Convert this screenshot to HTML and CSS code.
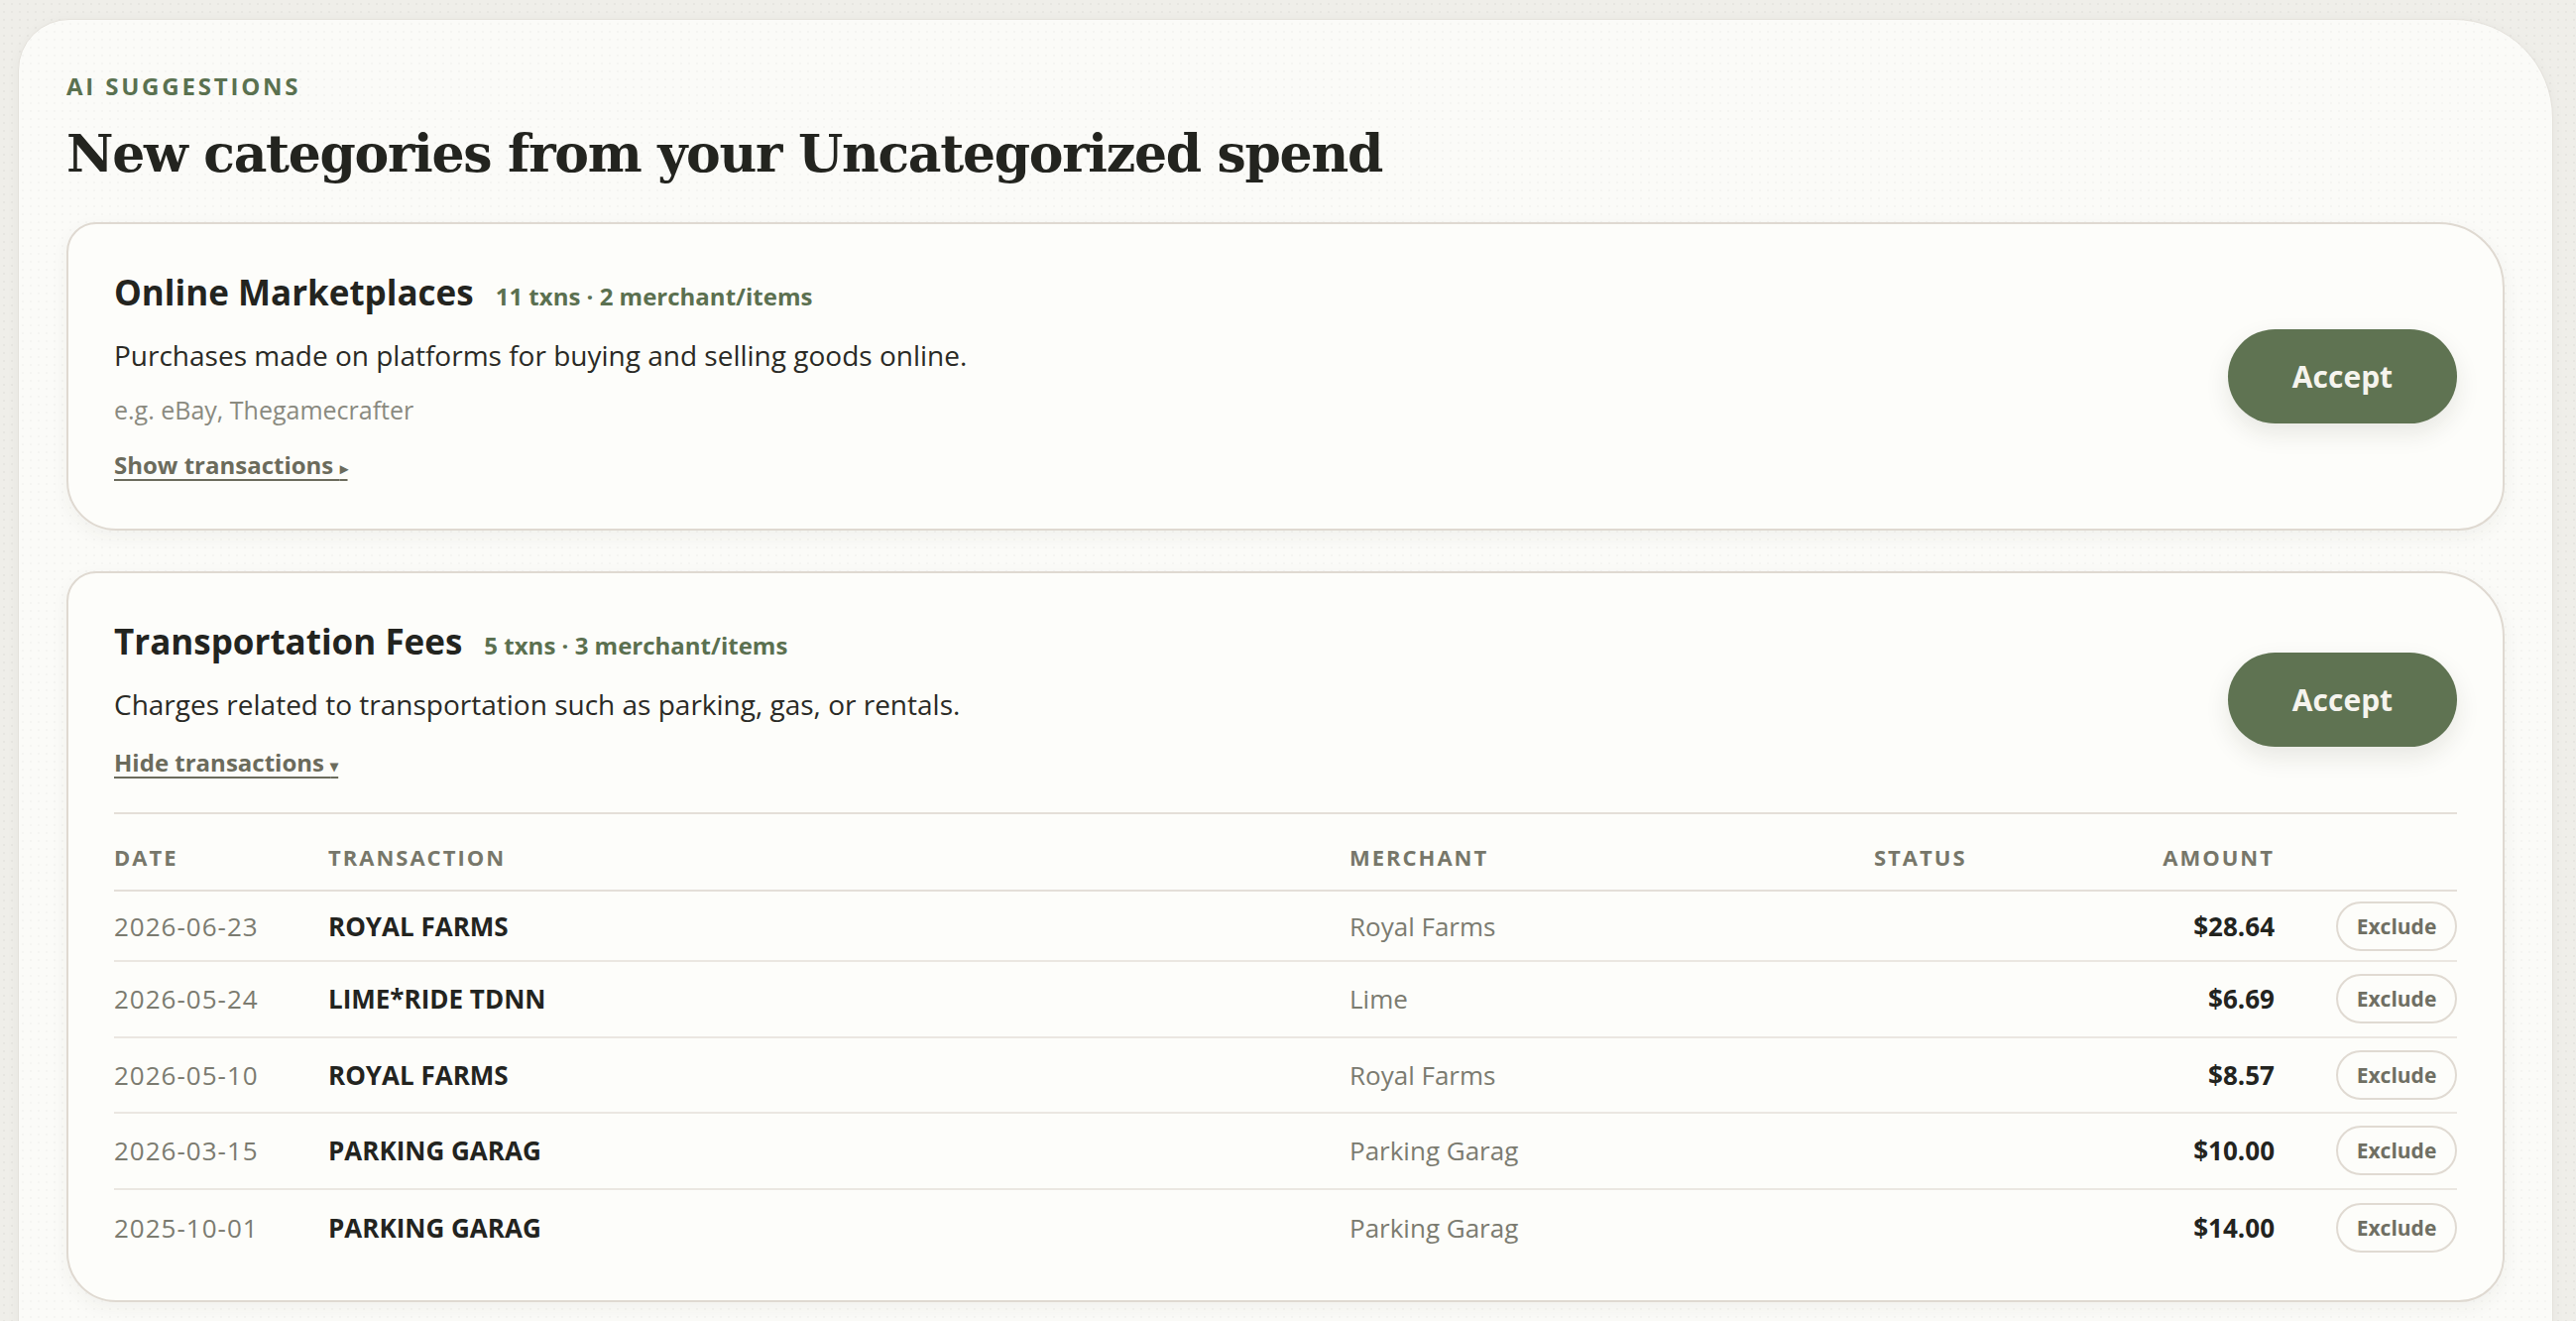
FILE: index.html
```html
<!DOCTYPE html>
<html lang="en">
<head>
    <meta charset="UTF-8">
    <title>AI Suggestions</title>
    <link rel="stylesheet" href="styles.css">
</head>
<body>
<section class="panel">
    <div class="eyebrow">AI SUGGESTIONS</div>
    <h1>New categories from your Uncategorized spend</h1>

    <!-- suggestion 1 (collapsed) -->
    <div class="card">
        <div class="card-head">
            <div class="card-info">
                <div class="card-title">
                    <h2>Online Marketplaces</h2>
                    <span class="meta">11 txns · 2 merchant/items</span>
                </div>
                <p class="desc">Purchases made on platforms for buying and selling goods online.</p>
                <p class="examples">e.g. eBay, Thegamecrafter</p>
                <a href="#" class="toggle">Show transactions <span class="caret">▸</span></a>
            </div>
            <button class="accept">Accept</button>
        </div>
    </div>

    <!-- suggestion 2 (expanded) -->
    <div class="card">
        <div class="card-head">
            <div class="card-info">
                <div class="card-title">
                    <h2>Transportation Fees</h2>
                    <span class="meta">5 txns · 3 merchant/items</span>
                </div>
                <p class="desc">Charges related to transportation such as parking, gas, or rentals.</p>
                <a href="#" class="toggle">Hide transactions <span class="caret">▾</span></a>
            </div>
            <button class="accept">Accept</button>
        </div>

        <div class="txns">
            <div class="txn-row txn-header">
                <div>DATE</div>
                <div>TRANSACTION</div>
                <div>MERCHANT</div>
                <div>STATUS</div>
                <div class="amount">AMOUNT</div>
                <div></div>
            </div>
            <div class="txn-row">
                <div class="date">2026-06-23</div>
                <div class="name">ROYAL FARMS</div>
                <div class="merchant">Royal Farms</div>
                <div></div>
                <div class="amount">$28.64</div>
                <div class="action"><button class="exclude">Exclude</button></div>
            </div>
            <div class="txn-row">
                <div class="date">2026-05-24</div>
                <div class="name">LIME*RIDE TDNN</div>
                <div class="merchant">Lime</div>
                <div></div>
                <div class="amount">$6.69</div>
                <div class="action"><button class="exclude">Exclude</button></div>
            </div>
            <div class="txn-row">
                <div class="date">2026-05-10</div>
                <div class="name">ROYAL FARMS</div>
                <div class="merchant">Royal Farms</div>
                <div></div>
                <div class="amount">$8.57</div>
                <div class="action"><button class="exclude">Exclude</button></div>
            </div>
            <div class="txn-row">
                <div class="date">2026-03-15</div>
                <div class="name">PARKING GARAG</div>
                <div class="merchant">Parking Garag</div>
                <div></div>
                <div class="amount">$10.00</div>
                <div class="action"><button class="exclude">Exclude</button></div>
            </div>
            <div class="txn-row">
                <div class="date">2025-10-01</div>
                <div class="name">PARKING GARAG</div>
                <div class="merchant">Parking Garag</div>
                <div></div>
                <div class="amount">$14.00</div>
                <div class="action"><button class="exclude">Exclude</button></div>
            </div>
        </div>
    </div>
</section>
</body>
</html>
```
FILE: styles.css
```css
body {
    margin: 0;
    font-family: "Open Sans", "Noto Sans", sans-serif;
    color: #2a2a25;
    background-color: #efeee9;
    background-image: radial-gradient(circle, rgba(0,0,0,0.035) 1px, transparent 1.3px);
    background-size: 8px 8px;
}

.panel {
    margin: 19px 23px 0 18px;
    padding: 54px 48px 48px;
    background-color: #fbfbf8;
    background-image: radial-gradient(circle, rgba(0,0,0,0.025) 1px, transparent 1.3px);
    background-size: 8px 8px;
    border: 1px solid #e4e1db;
    border-radius: 52px 100px 0 0;
    box-shadow: 0 2px 14px rgba(0,0,0,0.04);
}

.eyebrow {
    font-size: 24px;
    line-height: 26px;
    font-weight: bold;
    letter-spacing: 2.8px;
    color: #5a7150;
}

h1 {
    margin: 23px 0 37px;
    font-family: "DejaVu Serif", serif;
    font-size: 52px;
    line-height: 64px;
    letter-spacing: -1.3px;
    color: #23241f;
}

.card {
    margin-bottom: 41px;
    padding: 46px;
    background-color: #fdfdfa;
    border: 2px solid #dfd9d1;
    border-radius: 30px 66px 46px 50px;
    box-shadow: 0 6px 18px rgba(60,50,30,0.05);
}

.card-head {
    display: flex;
    align-items: center;
    justify-content: space-between;
    gap: 40px;
}

.card-title {
    display: flex;
    align-items: baseline;
    gap: 22px;
}

.card-title h2 {
    margin: 0;
    font-size: 35px;
    line-height: 46px;
    color: #23241f;
}

.meta {
    font-size: 24px;
    font-weight: bold;
    color: #5b7050;
}

.desc {
    margin: 22px 0 0;
    font-size: 28px;
    line-height: 36px;
    color: #2a2a25;
}

.examples {
    margin: 22px 0 0;
    font-size: 25px;
    line-height: 30px;
    color: #8a8a80;
}

.toggle {
    display: inline-block;
    margin-top: 26px;
    font-size: 24px;
    line-height: 30px;
    font-weight: bold;
    color: #6b6b5c;
    text-decoration: underline;
    text-decoration-thickness: 2px;
    text-underline-offset: 5px;
}

.caret {
    font-size: 16px;
}

.accept {
    width: 231px;
    height: 95px;
    flex-shrink: 0;
    border: none;
    border-radius: 48px;
    background-color: #5f7352;
    color: #f6f4ee;
    font-family: inherit;
    font-size: 30px;
    font-weight: bold;
    box-shadow: 0 10px 24px rgba(40,40,20,0.10);
    cursor: pointer;
}

.txns {
    margin-top: 32px;
    margin-bottom: -11px;
    border-top: 2px solid #e4dfd8;
}

.txn-row {
    box-sizing: border-box;
    display: grid;
    grid-template-columns: 216px 1030px 529px 1fr 140px 184px;
    align-items: center;
    height: 76.5px;
    border-bottom: 2px solid #ebe7e1;
    font-size: 26px;
}

.txn-header + .txn-row {
    height: 71px;
}

.txn-row:last-child {
    border-bottom: none;
}

.txn-header {
    height: 78px;
    padding-top: 10px;
    border-bottom-color: #e4dfd8;
    font-size: 22px;
    font-weight: bold;
    letter-spacing: 2px;
    color: #77776a;
}

.date {
    letter-spacing: 1px;
}

.date,
.merchant {
    color: #7b7b70;
}

.name {
    font-weight: bold;
    color: #23241f;
}

.amount {
    text-align: right;
    font-weight: bold;
    color: #23241f;
}

.txn-header .amount {
    color: #77776a;
}

.action {
    text-align: right;
}

.exclude {
    width: 122px;
    height: 50px;
    border: 2px solid #e0dad2;
    border-radius: 25px;
    background: transparent;
    font-family: inherit;
    font-size: 21px;
    font-weight: bold;
    color: #6f6f63;
    cursor: pointer;
}
```
